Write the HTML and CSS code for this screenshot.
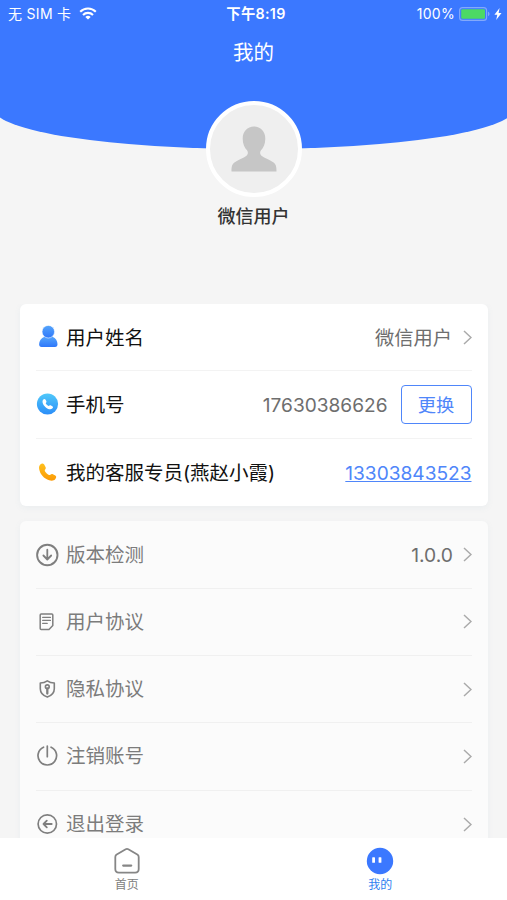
FILE: index.html
```html
<!DOCTYPE html>
<html lang="zh-CN">
<head>
    <meta charset="UTF-8">
    <meta name="viewport" content="width=device-width, initial-scale=1.0">
    <title>我的</title>
    <link rel="stylesheet" href="styles.css">
</head>
<body>

<div class="page">
    <header class="header">
        <div class="header-inner">
            <div class="status-bar">
                <div class="status-left">
                    <span class="carrier">无 SIM 卡</span>
                    <svg class="wifi" width="18" height="13" viewBox="0 0 18 13" fill="none" stroke="#fff" stroke-width="2.1">
                        <path d="M1.2 4.800a11 11 0 0 1 15.600 0"/>
                        <path d="M4 7.900a7.200 7.200 0 0 1 10 0"/>
                        <path d="M9 12.600 6.300 10a3.900 3.900 0 0 1 5.400 0z" fill="#fff" stroke="none"/>
                    </svg>
                </div>
                <div class="status-time">下午8:19</div>
                <div class="status-right">
                    <span class="percent">100%</span>
                    <svg width="31" height="14" viewBox="0 0 31 14">
                        <rect x=".6" y=".6" width="27" height="12.8" rx="3" fill="none" stroke="#83a9fb" stroke-width="1.1"/>
                        <rect x="2.2" y="2.2" width="23.8" height="9.6" rx="1.2" fill="#4cd964"/>
                        <path d="M29 4.800c2 .7 2 3.700 0 4.400z" fill="#83a9fb"/>
                    </svg>
                    <svg class="bolt" width="8" height="12" viewBox="0 0 8 12">
                        <path d="M5.600 0 .4 6.800h2.900L2.200 12l5.300-7H4.600z" fill="#fff"/>
                    </svg>
                </div>
            </div>
            <h1 class="title">我的</h1>
        </div>
    </header>

    <section class="profile">
        <div class="avatar">
            <svg width="46" height="46" viewBox="0 0 46 46" fill="#c6c6c6">
                <path d="M23 .5c-6.700 0-11.300 5-11.300 12.200 0 5.300 1.900 9 4.300 11.600 1.300 1.600 1.200 4-.5 5.500-2.900 2.300-8.800 4.300-12.100 6.800C.8 38.600.5 41.200.5 45.500h45c0-4.300-.3-6.900-2.900-8.900-3.300-2.500-9.200-4.500-12.100-6.800-1.700-1.500-1.800-3.900-.5-5.500 2.400-2.600 4.300-6.300 4.300-11.600C34.300 5.500 29.700.5 23 .5z"/>
            </svg>
        </div>
        <div class="nickname">微信用户</div>
    </section>

    <main class="content">
        <div class="card">
            <div class="row">
                <svg class="icon" width="24" height="24" viewBox="0 0 24 24">
                    <defs>
                        <linearGradient id="userFill" x1="0" y1="0" x2="0" y2="1">
                            <stop offset="0" stop-color="#55a5fb"/>
                            <stop offset="1" stop-color="#2f78fa"/>
                        </linearGradient>
                    </defs>
                    <path d="M8.500 11.800h8c3.300 1.400 5 4.200 5 7.500 0 1.600-.8 2.600-2.500 2.600H5.600c-1.700 0-2.500-1-2.500-2.600 0-3.300 2-6.100 5.400-7.500z" fill="url(#userFill)"/>
                    <circle cx="12.300" cy="6.700" r="6.300" fill="url(#userFill)" stroke="#fff" stroke-width=".6"/>
                </svg>
                <span class="label">用户姓名</span>
                <span class="value">微信用户</span>
                <svg class="arrow" width="9" height="15" viewBox="0 0 9 15"><path d="m1 1 7 6.500L1 14"/></svg>
            </div>
            <div class="row">
                <svg class="icon" width="24" height="24" viewBox="0 0 24 24">
                    <defs>
                        <linearGradient id="phoneFill" x1="0" y1="0" x2="0" y2="1">
                            <stop offset="0" stop-color="#50c9fa"/>
                            <stop offset="1" stop-color="#2b8df8"/>
                        </linearGradient>
                    </defs>
                    <circle cx="11.500" cy="12" r="10.600" fill="url(#phoneFill)"/>
                    <path d="M7.100 7.700c.9-1.100 1.900-1 2.500.1l.8 1.500c.3.700-.2 1.300-.7 1.900.7 1.300 1.600 2.100 3 2.700.7-.6 1.300-.9 1.900-.6l1.700.9c1 .6.900 1.500-.1 2.400-1.700 1.400-4.700.4-6.900-1.700-2.300-2.200-3.600-5.500-2.200-7.200z" fill="#fff"/>
                </svg>
                <span class="label">手机号</span>
                <span class="value number">17630386626</span>
                <button class="change-btn" type="button">更换</button>
            </div>
            <div class="row">
                <svg class="icon" width="24" height="24" viewBox="0 0 24 24">
                    <defs>
                        <linearGradient id="callFill" x1="0" y1="0" x2="0" y2="1">
                            <stop offset="0" stop-color="#ffc01c"/>
                            <stop offset="1" stop-color="#fb9a06"/>
                        </linearGradient>
                    </defs>
                    <path d="M4.300 4.500c1.500-1.500 2.900-1.400 3.900.1l1.300 2.300c.6 1.100.2 2-.6 2.900-.3.500-.2 1 .2 1.600 1 1.500 2.200 2.600 3.800 3.500.5.300 1 .2 1.500-.2.800-.7 1.600-.9 2.500-.4l2.400 1.300c1.300.8 1.200 2.200-.1 3.600-1.300 1.500-3.500 1.800-6 1C8 18.600 4.100 14.300 3.200 9.200c-.4-2 0-3.500 1.100-4.700z" fill="url(#callFill)"/>
                </svg>
                <span class="label">我的客服专员(燕赵小霞)</span>
                <a class="value number phone-link" href="tel:13303843523">13303843523</a>
            </div>
        </div>

        <div class="card card-muted">
            <div class="row">
                <svg class="icon line" width="24" height="24" viewBox="0 0 24 24">
                    <circle cx="11.300" cy="12" r="10.200" stroke-width="1.900"/>
                    <path d="M11.300 6.700v9.600M7.400 12.500l3.900 4 3.900-4" stroke-width="1.800"/>
                </svg>
                <span class="label">版本检测</span>
                <span class="value version">1.0.0</span>
                <svg class="arrow" width="9" height="15" viewBox="0 0 9 15"><path d="m1 1 7 6.500L1 14"/></svg>
            </div>
            <div class="row">
                <svg class="icon line" width="24" height="24" viewBox="0 0 24 24">
                    <path d="M5.200 4h10.600c.7 0 1 .4 1 1v10.500l-3.800 4H5.200c-.7 0-1-.4-1-1V5c0-.6.300-1 1-1z" stroke-width="1.500"/>
                    <path d="M6.700 7.400h7.700M6.700 10.400h7.700M6.700 13.400h4.500" stroke-width="1.300"/>
                </svg>
                <span class="label">用户协议</span>
                <svg class="arrow" width="9" height="15" viewBox="0 0 9 15"><path d="m1 1 7 6.500L1 14"/></svg>
            </div>
            <div class="row">
                <svg class="icon line" width="24" height="24" viewBox="0 0 24 24">
                    <path d="M11.300 3.800c2.200 1.500 4.500 2.100 7 2.200v5.800c0 4-2.900 6.900-7 8.300-4.100-1.400-7-4.300-7-8.300V6c2.500-.1 4.800-.7 7-2.200z" stroke-width="1.600"/>
                    <circle cx="11.300" cy="9.800" r="1.900" stroke-width="1.600"/>
                    <path d="M11.300 11.500v5" stroke-width="2.300"/>
                </svg>
                <span class="label">隐私协议</span>
                <svg class="arrow" width="9" height="15" viewBox="0 0 9 15"><path d="m1 1 7 6.500L1 14"/></svg>
            </div>
            <div class="row">
                <svg class="icon line" width="24" height="24" viewBox="0 0 24 24">
                    <path d="M7.500 3.200a9.300 9.300 0 1 0 7.600 0M11.300 2v10.700" stroke-width="1.700"/>
                </svg>
                <span class="label">注销账号</span>
                <svg class="arrow" width="9" height="15" viewBox="0 0 9 15"><path d="m1 1 7 6.500L1 14"/></svg>
            </div>
            <div class="row">
                <svg class="icon line" width="24" height="24" viewBox="0 0 24 24">
                    <circle cx="11.300" cy="12" r="9.200" stroke-width="1.700"/>
                    <path d="M7.500 12h8.200M10.800 8.700 7.500 12l3.300 3.300" stroke-width="1.800"/>
                </svg>
                <span class="label">退出登录</span>
                <svg class="arrow" width="9" height="15" viewBox="0 0 9 15"><path d="m1 1 7 6.500L1 14"/></svg>
            </div>
        </div>
    </main>

    <nav class="tab-bar">
        <a class="tab" href="#">
            <svg width="28" height="28" viewBox="0 0 28 28" fill="none" stroke="#868686" stroke-linejoin="round" stroke-linecap="round">
                <path d="m12.700 2.300-9 5.200c-1 .6-1.400 1.300-1.400 2.400v12.200c0 2.300 1.200 3.500 3.500 3.500h16.400c2.300 0 3.500-1.200 3.500-3.500V9.900c0-1.100-.4-1.800-1.400-2.400l-9-5.200c-.9-.5-1.700-.5-2.600 0z" stroke-width="1.800"/>
                <path d="M10.200 18.600h8" stroke-width="2.200"/>
            </svg>
            <span>首页</span>
        </a>
        <a class="tab active" href="#">
            <svg width="28" height="28" viewBox="0 0 28 28">
                <circle cx="14" cy="14" r="13.200" fill="#3b78ff"/>
                <rect x="6.200" y="10.200" width="2.800" height="5.600" rx=".6" fill="#fff"/>
                <rect x="12.600" y="10.200" width="2.800" height="5.600" rx=".6" fill="#fff"/>
            </svg>
            <span>我的</span>
        </a>
    </nav>
</div>

</body>
</html>
```
FILE: styles.css
```css
* {
    box-sizing: border-box;
}
body {
    margin: 0;
    font-family: Inter, "Noto Sans CJK SC", sans-serif;
    background: #f5f5f5;
    color: #222;
}
.page {
    display: flex;
    flex-direction: column;
    height: 900px;
    overflow: hidden;
}

/* Header */
.header {
    flex: none;
    height: 148.5px;
    margin: 0 -6.5px;
    padding: 0 6.5px;
    background: #3b78ff;
    border-radius: 0 0 50% 50% / 0 0 40px 40px;
    color: #fff;
}
.status-bar {
    display: grid;
    grid-template-columns: 1fr auto 1fr;
    align-items: center;
    height: 27px;
    padding: 0 5px 0 8px;
    font-size: 14px;
    line-height: 20px;
}
.status-left,
.status-right {
    display: flex;
    align-items: center;
}
.status-left {
    gap: 8px;
}
.carrier {
    letter-spacing: 0.3px;
}
.status-right {
    justify-content: flex-end;
}
.status-time {
    margin-left: 2px;
    font-size: 14.3px;
    font-weight: 600;
    letter-spacing: 0.3px;
}
.percent {
    margin-right: 4px;
    letter-spacing: 0.3px;
}
.bolt {
    margin-left: 4px;
}
.title {
    margin: 11px 0 0;
    font-size: 20.5px;
    font-weight: 400;
    line-height: 30px;
    text-align: center;
}

/* Avatar and name */
.profile {
    flex: none;
    display: flex;
    flex-direction: column;
    align-items: center;
    height: 203px;
    margin-top: -47.5px;
}
.avatar {
    display: flex;
    align-items: center;
    justify-content: center;
    width: 96px;
    height: 96px;
    margin-left: 1px;
    border: 4.5px solid #fff;
    border-radius: 50%;
    background: #efefef;
}
.nickname {
    margin-top: 7px;
    font-size: 18px;
    font-weight: 500;
    line-height: 26px;
    color: #333;
}

/* Cards */
.content {
    flex: 1;
    min-height: 0;
    padding: 0 19.5px;
    overflow: hidden;
}
.card {
    padding: 0 16px;
    margin-bottom: 15.5px;
    border-radius: 6px;
    background: #fff;
    box-shadow: 0 2px 6px rgba(120, 150, 180, 0.08);
}
.row {
    display: flex;
    align-items: center;
    height: 67.3px;
    border-bottom: 1.5px solid #f3f3f3;
}
.row:last-child {
    border-bottom: none;
}
.icon {
    flex: none;
    margin-right: 6.5px;
}
.line {
    fill: none;
    stroke: #7f7f7f;
    stroke-linecap: round;
    stroke-linejoin: round;
}
.label {
    flex: 1;
    padding-top: 1px;
    font-size: 19.5px;
    line-height: 28px;
    color: #111;
}
.value {
    padding-top: 1px;
    font-size: 19.3px;
    line-height: 28px;
    color: #6e6e6e;
}
.number {
    font-size: 19.1px;
}
.arrow {
    flex: none;
    margin-left: 10.5px;
    fill: none;
    stroke: #aaa;
    stroke-width: 1.5;
}
.change-btn {
    width: 71px;
    height: 39px;
    margin-left: 13px;
    padding: 0;
    border: 1.5px solid #4f86fa;
    border-radius: 4px;
    background: #fff;
    color: #4f86fa;
    font-family: inherit;
    font-size: 18.3px;
}
.phone-link {
    color: #4f86fa;
    text-decoration: underline;
}
.card-muted {
    background: #fbfbfb;
}
.card-muted .row {
    border-color: #f0f0f0;
}
.card-muted .label {
    padding-top: 0;
    color: #7c7c7c;
}
.version {
    padding-top: 0;
    margin-right: -1px;
}

/* Tab bar */
.tab-bar {
    flex: none;
    display: flex;
    height: 62px;
    background: #fff;
}
.tab {
    flex: 1;
    display: flex;
    flex-direction: column;
    align-items: center;
    padding-top: 9px;
    font-size: 12px;
    line-height: 20px;
    color: #808080;
    text-decoration: none;
}
.active {
    color: #2f80f0;
}
```
